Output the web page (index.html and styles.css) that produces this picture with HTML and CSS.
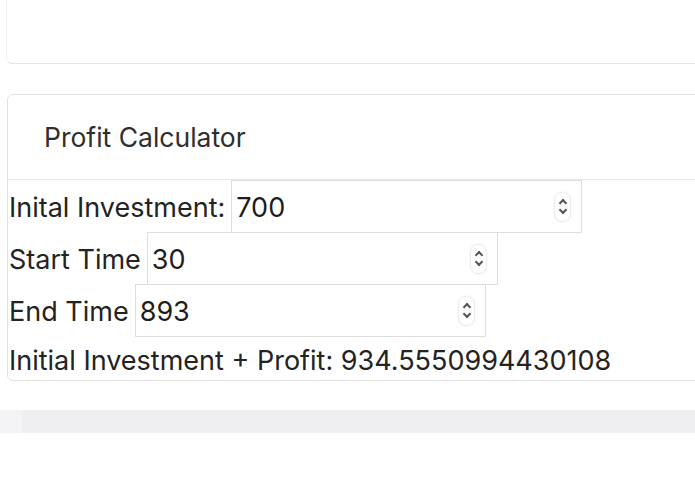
FILE: index.html
```html
<!DOCTYPE html>
<html lang="en">
<head>
    <meta charset="UTF-8">
    <title>Profit Calculator</title>
    <link rel="stylesheet" href="styles.css">
</head>
<body>
    <div class="prev-card"></div>

    <div class="card">
        <div class="card-header">Profit Calculator</div>
        <div class="card-body">
            <div class="row">
                <label>Inital Investment:</label>
                <span class="field">
                    <input type="text" value="700">
                    <span class="spin"><i class="up"></i><i class="down"></i></span>
                </span>
            </div>
            <div class="row">
                <label>Start Time</label>
                <span class="field">
                    <input type="text" value="30">
                    <span class="spin"><i class="up"></i><i class="down"></i></span>
                </span>
            </div>
            <div class="row">
                <label>End Time</label>
                <span class="field">
                    <input type="text" value="893">
                    <span class="spin"><i class="up"></i><i class="down"></i></span>
                </span>
            </div>
            <p class="result">Initial Investment + Profit: <span id="total">934.5550994430108</span></p>
        </div>
    </div>

    <div class="footer-bar"><div class="footer-edge"></div></div>
</body>
</html>
```

FILE: styles.css
```css
html, body {
    overflow: hidden;
}

body {
    margin: 0;
    background: #fff;
    font-family: Inter, "Liberation Sans", Arial, sans-serif;
    color: #232323;
}

.prev-card {
    height: 63px;
    margin: 0 -20px 0 6px;
    border: 1px solid #e4e4e4;
    border-top: none;
    border-left-color: #f3f3f3;
    border-radius: 0 0 6px 6px;
}

.card {
    margin: 30px -20px 0 7px;
    border: 1px solid #e2e2e2;
    border-radius: 6px;
}

.card-header {
    height: 84px;
    display: flex;
    align-items: center;
    padding-left: 36px;
    font-size: 26.5px;
    color: #2e2e2e;
    border-bottom: 1px solid #e6e6e6;
}

.card-body {
    padding-left: 1px;
}

.row {
    display: flex;
    align-items: center;
    height: 52px;
}

label {
    font-size: 27px;
    margin-right: 6px;
    padding-top: 3px;
}

.field {
    position: relative;
    display: block;
}

input {
    box-sizing: border-box;
    width: 351px;
    height: 53px;
    margin: 0;
    padding: 3px 5px 0 4px;
    border: 1px solid #dedede;
    border-radius: 0;
    font-family: inherit;
    font-size: 27px;
    color: #1d1d1d;
    outline: none;
}

.spin {
    position: absolute;
    right: 11px;
    top: 12px;
    width: 15px;
    height: 28px;
    border: 1px solid #ececec;
    border-radius: 8px;
    box-shadow: 0 0 2px rgba(0,0,0,0.08);
}

.spin i {
    position: absolute;
    left: 5px;
    width: 4px;
    height: 4px;
    border-left: 2px solid #555;
    border-top: 2px solid #555;
}

.spin .up {
    top: 7px;
    transform: rotate(45deg);
}

.spin .down {
    top: 14px;
    transform: rotate(225deg);
}

.result {
    margin: 0;
    height: 41px;
    padding-top: 3px;
    line-height: 44px;
    font-size: 27px;
}

.footer-bar {
    margin-top: 29px;
    height: 23px;
    background: #efeff2;
}

.footer-edge {
    width: 22px;
    height: 100%;
    background: #f4f4f6;
}
```
